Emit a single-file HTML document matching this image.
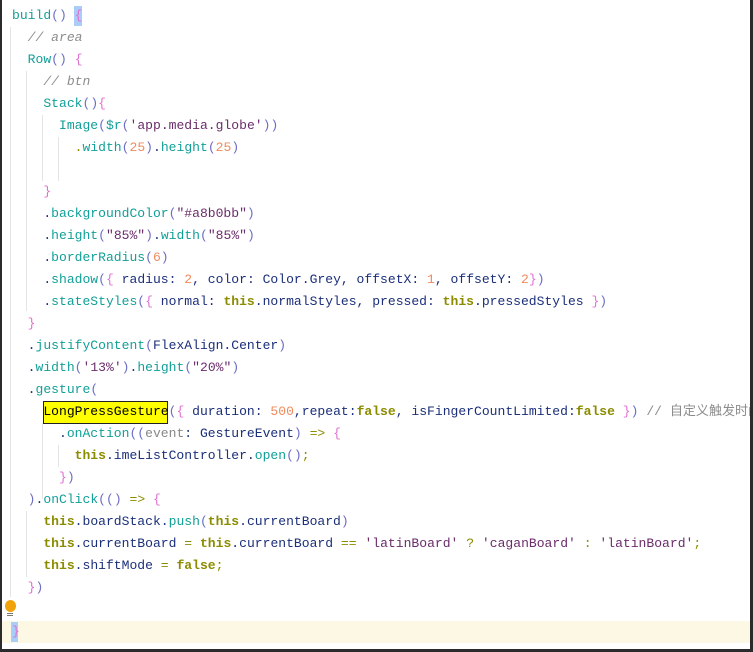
<!DOCTYPE html>
<html><head><meta charset="utf-8"><style>
body{margin:0;width:753px;height:652px;overflow:hidden;background:#fff;position:relative}
.frame{position:absolute;left:0;top:0;width:753px;height:652px;box-sizing:border-box;border-left:2px solid #2b2b2b;border-right:3px solid #2b2b2b;border-bottom:3px solid #2b2b2b}
.l{position:absolute;left:12px;height:22px;line-height:22px;white-space:pre;font-family:"Liberation Mono","Noto Sans CJK SC",monospace;font-size:13.05px;color:#1b2f7a}
.f{color:#119f98}.p{color:#6d6dc4}.b{color:#e26fd0}.s{color:#6a2c6a}.n{color:#f08a5d}.k{color:#8c8c00;font-weight:bold}.o{color:#8c8c00}.c{color:#8c8c8c;font-style:italic}.c2{color:#8c8c8c}.g{color:#888}
.guide{position:absolute;width:1px;background:#e4e4e4}
</style></head><body>
<div style="position:absolute;left:2px;top:621px;width:748px;height:22px;background:#fdf8e3"></div>
<div class="guide" style="left:10px;top:27px;height:570px"></div>
<div class="guide" style="left:26px;top:71px;height:240px"></div>
<div class="guide" style="left:42px;top:115px;height:66px"></div>
<div class="guide" style="left:58px;top:137px;height:44px"></div>
<div class="guide" style="left:42px;top:423px;height:76px"></div>
<div class="guide" style="left:58px;top:445px;height:22px"></div>
<div class="guide" style="left:26px;top:511px;height:66px"></div>
<div style="position:absolute;left:43px;top:401px;width:123px;height:21px;background:#ffff00;border:1px solid #222"></div>
<div style="position:absolute;left:11px;top:622px;width:7px;height:20px;background:#a9cdf7"></div>
<div style="position:absolute;left:74px;top:6px;width:8px;height:20px;background:#a9cdf7"></div>
<div style="position:absolute;left:5px;top:600px;width:11px;height:12px;border-radius:50%;background:#f0a30a"></div>
<div style="position:absolute;left:7px;top:613px;width:6px;height:1px;background:#777"></div>
<div style="position:absolute;left:7px;top:615px;width:6px;height:1px;background:#777"></div>
<div class="l" style="top:5px"><span class="f">build</span><span class="p">()</span> <span class="b">{</span></div>
<div class="l" style="top:27px">  <span class="c">// area</span></div>
<div class="l" style="top:49px">  <span class="f">Row</span><span class="p">()</span> <span class="b">{</span></div>
<div class="l" style="top:71px">    <span class="c">// btn</span></div>
<div class="l" style="top:93px">    <span class="f">Stack</span><span class="p">()</span><span class="b">{</span></div>
<div class="l" style="top:115px">      <span class="f">Image</span><span class="p">(</span><span class="f">$r</span><span class="p">(</span><span class="s">'app.media.globe'</span><span class="p">))</span></div>
<div class="l" style="top:137px">        <span class="o">.</span><span class="f">width</span><span class="p">(</span><span class="n">25</span><span class="p">)</span>.<span class="f">height</span><span class="p">(</span><span class="n">25</span><span class="p">)</span></div>
<div class="l" style="top:181px">    <span class="b">}</span></div>
<div class="l" style="top:203px">    .<span class="f">backgroundColor</span><span class="p">(</span><span class="s">"#a8b0bb"</span><span class="p">)</span></div>
<div class="l" style="top:225px">    .<span class="f">height</span><span class="p">(</span><span class="s">"85%"</span><span class="p">)</span>.<span class="f">width</span><span class="p">(</span><span class="s">"85%"</span><span class="p">)</span></div>
<div class="l" style="top:247px">    .<span class="f">borderRadius</span><span class="p">(</span><span class="n">6</span><span class="p">)</span></div>
<div class="l" style="top:269px">    .<span class="f">shadow</span><span class="p">(</span><span class="b">{</span> radius: <span class="n">2</span>, color: Color.Grey, offsetX: <span class="n">1</span>, offsetY: <span class="n">2</span><span class="b">}</span><span class="p">)</span></div>
<div class="l" style="top:291px">    .<span class="f">stateStyles</span><span class="p">(</span><span class="b">{</span> normal: <span class="k">this</span>.normalStyles, pressed: <span class="k">this</span>.pressedStyles <span class="b">}</span><span class="p">)</span></div>
<div class="l" style="top:313px">  <span class="b">}</span></div>
<div class="l" style="top:335px">  .<span class="f">justifyContent</span><span class="p">(</span>FlexAlign.Center<span class="p">)</span></div>
<div class="l" style="top:357px">  .<span class="f">width</span><span class="p">(</span><span class="s">'13%'</span><span class="p">)</span>.<span class="f">height</span><span class="p">(</span><span class="s">"20%"</span><span class="p">)</span></div>
<div class="l" style="top:379px">  .<span class="f">gesture</span><span class="p">(</span></div>
<div class="l" style="top:401px">    <span style="color:#000">LongPressGesture</span><span class="p">(</span><span class="b">{</span> duration: <span class="n">500</span>,repeat:<span class="k">false</span>, isFingerCountLimited:<span class="k">false</span> <span class="b">}</span><span class="p">)</span> <span class="c2">// 自定义触发时间</span></div>
<div class="l" style="top:423px">      .<span class="f">onAction</span><span class="p">((</span><span class="g">event</span>: GestureEvent<span class="p">)</span> <span class="o">=&gt;</span> <span class="b">{</span></div>
<div class="l" style="top:445px">        <span class="k">this</span>.imeListController.<span class="f">open</span><span class="p">()</span><span class="o">;</span></div>
<div class="l" style="top:467px">      <span class="b">}</span><span class="p">)</span></div>
<div class="l" style="top:489px">  <span class="p">)</span>.<span class="f">onClick</span><span class="p">(()</span> <span class="o">=&gt;</span> <span class="b">{</span></div>
<div class="l" style="top:511px">    <span class="k">this</span>.boardStack.<span class="f">push</span><span class="p">(</span><span class="k">this</span>.currentBoard<span class="p">)</span></div>
<div class="l" style="top:533px">    <span class="k">this</span>.currentBoard <span class="o">=</span> <span class="k">this</span>.currentBoard <span class="o">==</span> <span class="s">'latinBoard'</span> <span class="o">?</span> <span class="s">'caganBoard'</span> <span class="o">:</span> <span class="s">'latinBoard'</span><span class="o">;</span></div>
<div class="l" style="top:555px">    <span class="k">this</span>.shiftMode <span class="o">=</span> <span class="k">false</span><span class="o">;</span></div>
<div class="l" style="top:577px">  <span class="b">}</span><span class="p">)</span></div>
<div class="l" style="top:621px"><span class="b">}</span></div>
<div class="frame"></div>
</body></html>
